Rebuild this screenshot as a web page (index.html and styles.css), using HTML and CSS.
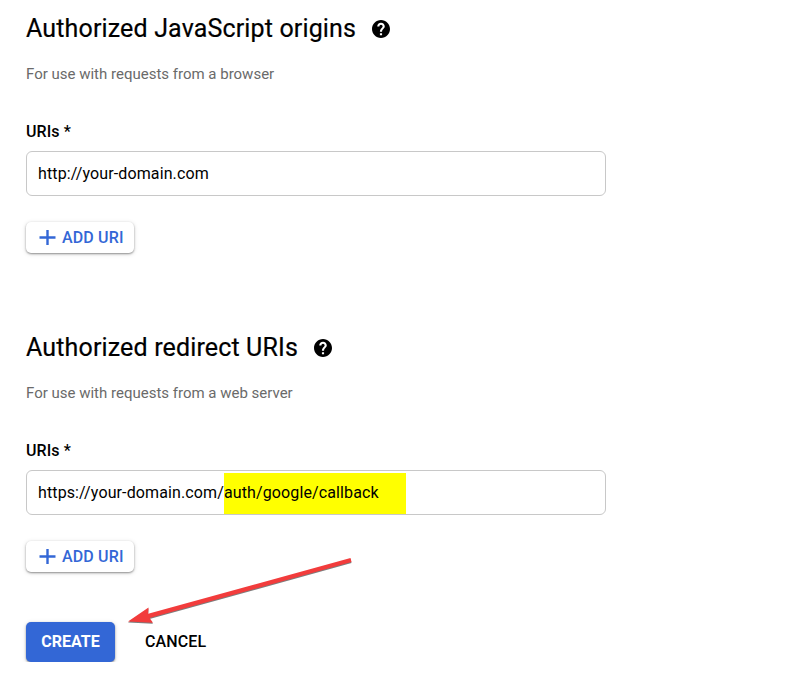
FILE: index.html
```html
<!DOCTYPE html>
<html lang="en">
<head>
<meta charset="utf-8">
<title>OAuth client</title>
<link rel="stylesheet" href="styles.css">
</head>
<body>
<main class="form">
  <section class="group">
    <h2 class="title"><span>Authorized JavaScript origins</span>
      <svg class="help" viewBox="2 2 20 20"><path d="M12 2C6.48 2 2 6.48 2 12s4.48 10 10 10 10-4.48 10-10S17.52 2 12 2zm1.2 17h-2.4v-2.2h2.4V19zm2.07-7.75l-.9.92C13.65 12.9 13.2 13.5 13.2 15h-2.4v-.5c0-1.1.45-2.1 1.17-2.83l1.24-1.26c.37-.36.59-.86.59-1.31 0-1-.8-1.8-1.8-1.8s-1.8.8-1.8 1.9H7.8c0-2.31 1.89-4.2 4.2-4.2s4.2 1.89 4.2 4.2c0 .88-.36 1.48-.93 2.05z"/></svg>
    </h2>
    <p class="hint">For use with requests from a browser</p>
    <div class="label">URIs *</div>
    <div class="field"><span class="value">http://your-domain.com</span></div>
    <button class="add"><svg class="plus" viewBox="0 0 16 16"><path d="M8.5 0v15M.5 7.5h16"/></svg><span>ADD URI</span></button>
  </section>
  <section class="group">
    <h2 class="title"><span>Authorized redirect URIs</span>
      <svg class="help" viewBox="2 2 20 20"><path d="M12 2C6.48 2 2 6.48 2 12s4.48 10 10 10 10-4.48 10-10S17.52 2 12 2zm1.2 17h-2.4v-2.2h2.4V19zm2.07-7.75l-.9.92C13.65 12.9 13.2 13.5 13.2 15h-2.4v-.5c0-1.1.45-2.1 1.17-2.83l1.24-1.26c.37-.36.59-.86.59-1.31 0-1-.8-1.8-1.8-1.8s-1.8.8-1.8 1.9H7.8c0-2.31 1.89-4.2 4.2-4.2s4.2 1.89 4.2 4.2c0 .88-.36 1.48-.93 2.05z"/></svg>
    </h2>
    <p class="hint">For use with requests from a web server</p>
    <div class="label">URIs *</div>
    <div class="field"><span class="value">https://your-domain.com/</span><span class="value mark">auth/google/callback</span></div>
    <button class="add"><svg class="plus" viewBox="0 0 16 16"><path d="M8.5 0v15M.5 7.5h16"/></svg><span>ADD URI</span></button>
  </section>
  <div class="actions">
    <button class="create">CREATE</button>
    <button class="cancel">CANCEL</button>
  </div>
</main>
<svg class="arrow" viewBox="0 0 230 70"><path d="M3 64.5L23.5 50.5L23.2 56.8L225.5 1L226.5 5L24.6 61L28 65.7Z"/></svg>
</body>
</html>
```
FILE: styles.css
```css
* { box-sizing: border-box; }
body {
  margin: 0;
  background: #fff;
  color: #000;
  font-family: Roboto, "Liberation Sans", sans-serif;
  font-size: 16px;
}
.form { padding: 11px 26px 0; }
.group { height: 319px; }
.title {
  display: flex;
  align-items: center;
  gap: 16px;
  height: 34px;
  margin: 0;
  font-size: 25px;
  font-weight: 400;
  letter-spacing: 0.15px;
  -webkit-text-stroke: 0.2px #000;
}
.help { width: 18px; height: 18px; margin-top: 1px; }
.hint {
  margin: 19px 0 0;
  line-height: 20px;
  font-size: 15px;
  color: #6a6a6a;
}
.label { margin-top: 38px; line-height: 20px; font-weight: 500; letter-spacing: 0.1px; }
.field {
  display: flex;
  width: 580px;
  height: 45px;
  margin-top: 9px;
  padding: 1px 11px 0;
  border: 1px solid #c8c8c8;
  border-radius: 6px;
}
.value { line-height: 42px; letter-spacing: 0.12px; }
.mark { width: 182px; height: 41px; margin-top: 1px; line-height: 40px; background: #ff0; }
button {
  display: flex;
  align-items: center;
  border: 0;
  font: 500 16px/20px Roboto, "Liberation Sans", sans-serif;
}
.add {
  gap: 7px;
  width: 108px;
  height: 31px;
  margin-top: 26px;
  padding: 0 0 0 13px;
  border-radius: 5px;
  background: #fff;
  color: #3367d6;
  letter-spacing: 0.15px;
  box-shadow: 0 1px 2px rgba(0, 0, 0, .38), 0 1px 5px rgba(0, 0, 0, .14);
}
.plus { width: 16px; height: 16px; overflow: visible; fill: none; stroke: #3367d6; stroke-width: 2.4; }
.actions { display: flex; margin-top: -27px; }
.create, .cancel { justify-content: center; height: 40px; padding: 0; }
.create {
  width: 89px;
  border-radius: 5px;
  background: #3367d6;
  color: #fff;
  font-weight: 700;
  box-shadow: 0 1px 2px rgba(0, 0, 0, .38), 0 1px 5px rgba(0, 0, 0, .14);
}
.cancel { margin-left: 30px; background: none; color: #000; letter-spacing: 0.1px; }
.arrow {
  position: absolute;
  left: 125px;
  top: 557px;
  width: 230px;
  height: 70px;
  fill: #f23c3c;
  filter: drop-shadow(0 1px 0.5px rgba(70, 70, 70, .7));
}
```
